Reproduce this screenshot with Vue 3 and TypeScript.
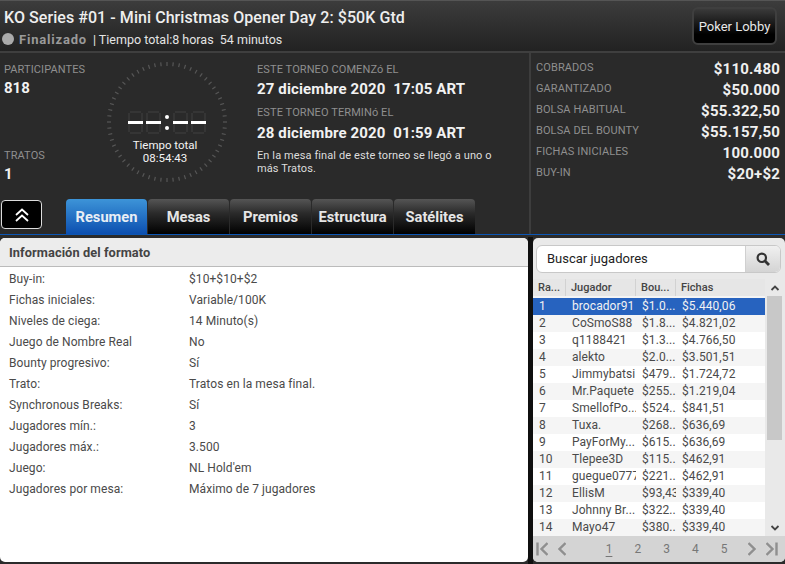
<script setup lang="ts">
const tabs = ['Resumen', 'Mesas', 'Premios', 'Estructura', 'Satélites']

const stats = [
  ['COBRADOS', '$110.480'],
  ['GARANTIZADO', '$50.000'],
  ['BOLSA HABITUAL', '$55.322,50'],
  ['BOLSA DEL BOUNTY', '$55.157,50'],
  ['FICHAS INICIALES', '100.000'],
  ['BUY-IN', '$20+$2'],
]

const info = [
  ['Buy-in:', '$10+$10+$2'],
  ['Fichas iniciales:', 'Variable/100K'],
  ['Niveles de ciega:', '14 Minuto(s)'],
  ['Juego de Nombre Real', 'No'],
  ['Bounty progresivo:', 'Sí'],
  ['Trato:', 'Tratos en la mesa final.'],
  ['Synchronous Breaks:', 'Sí'],
  ['Jugadores mín.:', '3'],
  ['Jugadores máx.:', '3.500'],
  ['Juego:', "NL Hold'em"],
  ['Jugadores por mesa:', 'Máximo de 7 jugadores'],
]

const players = [
  ['1', 'brocador91', '$1.0...', '$5.440,06'],
  ['2', 'CoSmoS88', '$1.8...', '$4.821,02'],
  ['3', 'q1188421', '$1.3...', '$4.766,50'],
  ['4', 'alekto', '$2.0...', '$3.501,51'],
  ['5', 'Jimmybatsi', '$479...', '$1.724,72'],
  ['6', 'Mr.Paquete', '$255...', '$1.219,04'],
  ['7', 'SmellofPo...', '$524...', '$841,51'],
  ['8', 'Tuxa.', '$268...', '$636,69'],
  ['9', 'PayForMy...', '$615...', '$636,69'],
  ['10', 'Tlepee3D', '$115...', '$462,91'],
  ['11', 'guegue0777', '$221...', '$462,91'],
  ['12', 'EllisM', '$93,43', '$339,40'],
  ['13', 'Johnny Br...', '$322...', '$339,40'],
  ['14', 'Mayo47', '$380...', '$339,40'],
]

const ticks = Array.from({ length: 60 }, (_, i) => i * 6)
const digitX = [-39, -21, 6, 24]
</script>

<template>
  <div class="page">
    <header class="head">
      <div class="head-text">
        <h1>KO Series #01 - Mini Christmas Opener Day 2: $50K Gtd</h1>
        <div class="status">
          <span class="dot"></span>
          <b>Finalizado</b>
          <span class="total">| Tiempo total:8 horas&nbsp; 54 minutos</span>
        </div>
      </div>
      <button class="lobby">Poker Lobby</button>
    </header>

    <section class="top">
      <div class="summary">
        <div class="overview">
          <div class="counts">
            <div>
              <div class="label">PARTICIPANTES</div>
              <div class="big">818</div>
            </div>
            <div>
              <div class="label">TRATOS</div>
              <div class="big">1</div>
            </div>
          </div>
          <div class="clock">
            <svg width="122" height="122" viewBox="-61 -61 122 122">
              <rect
                v-for="a in ticks"
                :key="a"
                x="-0.6"
                y="-60"
                width="1.2"
                height="4"
                fill="#575757"
                :transform="`rotate(${a})`"
              />
              <g v-for="x in digitX" :key="x" :transform="`translate(${x} -11)`">
                <path
                  d="M2 1H13M1 2V10M14 2V10M1 13V21M14 13V21M2 22H13"
                  fill="none"
                  stroke="#353535"
                  stroke-width="2"
                />
                <rect x="0" y="10" width="15" height="3" fill="#fff" />
              </g>
              <circle cx="0" cy="-5" r="2" fill="#fff" />
              <circle cx="0" cy="6" r="2" fill="#fff" />
            </svg>
            <div class="clock-text">Tiempo total<br />08:54:43</div>
          </div>
          <div class="dates">
            <div class="label">ESTE TORNEO COMENZó EL</div>
            <div class="big date">27 diciembre 2020&nbsp; 17:05 ART</div>
            <div class="label second">ESTE TORNEO TERMINó EL</div>
            <div class="big date last">28 diciembre 2020&nbsp; 01:59 ART</div>
            <p>En la mesa final de este torneo se llegó a uno o más Tratos.</p>
          </div>
        </div>
        <div class="tabbar">
          <button class="collapse" aria-label="Contraer">
            <svg width="16" height="16" viewBox="0 0 16 16" fill="none" stroke="#fff" stroke-width="1.8">
              <path d="M2 8 8 2.5 14 8M2 14 8 8.5 14 14" />
            </svg>
          </button>
          <nav class="tabs">
            <a v-for="(t, i) in tabs" :key="t" class="tab" :class="{ active: i === 0 }">{{ t }}</a>
          </nav>
        </div>
      </div>
      <dl class="stats">
        <div v-for="s in stats" :key="s[0]" class="stat">
          <dt>{{ s[0] }}</dt>
          <dd>{{ s[1] }}</dd>
        </div>
      </dl>
    </section>

    <main class="bottom">
      <section class="panel info">
        <h2>Información del formato</h2>
        <div v-for="r in info" :key="r[0]" class="info-row">
          <span>{{ r[0] }}</span>
          <span>{{ r[1] }}</span>
        </div>
      </section>

      <div class="divider"></div>

      <section class="panel players">
        <div class="search">
          <span class="search-text">Buscar jugadores</span>
          <span class="search-btn">
            <svg width="14" height="14" viewBox="0 0 14 14" fill="none" stroke="#333">
              <circle cx="5.8" cy="5.8" r="4.2" stroke-width="2.2" />
              <path d="M8.8 8.8 13 13" stroke-width="2.8" />
            </svg>
          </span>
        </div>
        <div class="table-wrap">
          <div class="table">
            <div class="thead">
              <span>Ra...</span><span>Jugador</span><span>Bou...</span><span>Fichas</span>
            </div>
            <div v-for="(p, i) in players" :key="p[0]" class="row" :class="{ sel: i === 0, odd: i % 2 === 1 }">
              <span v-for="c in p" :key="c">{{ c }}</span>
            </div>
          </div>
          <div class="scrollbar">
            <svg class="arrow" width="10" height="8" viewBox="0 0 10 8" fill="none" stroke="#444" stroke-width="1.8">
              <path d="M1.5 6 5 2.5 8.5 6" />
            </svg>
            <div class="track"><div class="thumb"></div></div>
            <svg class="arrow" width="10" height="8" viewBox="0 0 10 8" fill="none" stroke="#444" stroke-width="1.8">
              <path d="M1.5 2 5 5.5 8.5 2" />
            </svg>
          </div>
        </div>
        <div class="pager">
          <span class="pager-side">
            <svg width="12" height="14" viewBox="0 0 12 14" fill="none" stroke="#8f8f8f" stroke-width="2.4">
              <path d="M1.5 0.5V13.5M11.5 1 5.5 7l6 6" />
            </svg>
            <svg width="8" height="14" viewBox="0 0 8 14" fill="none" stroke="#8f8f8f" stroke-width="2.4">
              <path d="M7.5 1 1.5 7l6 6" />
            </svg>
          </span>
          <span class="pages">
            <u>1</u><span>2</span><span>3</span><span>4</span><span>5</span>
          </span>
          <span class="pager-side">
            <svg width="8" height="14" viewBox="0 0 8 14" fill="none" stroke="#8f8f8f" stroke-width="2.4">
              <path d="M0.5 1l6 6-6 6" />
            </svg>
            <svg width="12" height="14" viewBox="0 0 12 14" fill="none" stroke="#8f8f8f" stroke-width="2.4">
              <path d="M10.5 0.5V13.5M0.5 1l6 6-6 6" />
            </svg>
          </span>
        </div>
      </section>
    </main>
  </div>
</template>

<style>
html,
body {
  margin: 0;
  background: #2b2b2b;
}
</style>

<style scoped>
.page {
  width: 785px;
  height: 564px;
  overflow: hidden;
  display: flex;
  flex-direction: column;
  font-family: Roboto, "Liberation Sans", sans-serif;
  background: #2b2b2b;
}

.head {
  box-sizing: border-box;
  height: 53px;
  flex: none;
  display: flex;
  justify-content: space-between;
  padding: 6px 8px 0 4px;
  background: linear-gradient(#3c3c3c, #222);
  border-top: 1px solid #555;
  border-bottom: 2px solid #3f3f3f;
}

.head-text {
  padding-top: 1px;
}

h1 {
  margin: 0;
  font-size: 16px;
  line-height: 19px;
  font-weight: 500;
  color: #eee;
  letter-spacing: 0.06px;
}

.status {
  display: flex;
  align-items: center;
  margin-top: 3px;
  height: 18px;
  font-size: 12.5px;
  color: #e4e4e4;
}

.dot {
  width: 12px;
  height: 12px;
  border-radius: 50%;
  background: #aaa;
  margin: 0 5px 0 -2px;
}

.status b {
  font-size: 13px;
  font-weight: 700;
  color: #9a9a9a;
  letter-spacing: 0.8px;
  margin-right: 6px;
}

.lobby {
  width: 85px;
  height: 38px;
  padding: 0;
  border: 2px solid #3f3f3f;
  border-radius: 6px;
  background: linear-gradient(#3a3a3a, #000 75%);
  color: #e8e8e8;
  font: 13px Roboto, sans-serif;
}

.top {
  height: 181px;
  flex: none;
  display: flex;
  background: #2a2a2a;
  border-bottom: 1px solid #0c56b4;
}

.summary {
  width: 529px;
  flex: none;
  display: flex;
  flex-direction: column;
  border-right: 2px solid #3d3d3d;
}

.overview {
  height: 146px;
  display: flex;
}

.counts {
  width: 106px;
  padding: 10px 0 0 4px;
  box-sizing: border-box;
  display: flex;
  flex-direction: column;
  gap: 51px;
}

.label {
  font-size: 11px;
  line-height: 13px;
  color: #8f8f8f;
  letter-spacing: 0.1px;
}

.big {
  margin-top: 3px;
  font-size: 15px;
  line-height: 19px;
  font-weight: 700;
  color: #f2f2f2;
}

.clock {
  position: relative;
  width: 122px;
  height: 122px;
  margin-top: 8px;
  flex: none;
}

.clock-text {
  position: absolute;
  left: 0;
  right: 4px;
  top: 78px;
  text-align: center;
  font-size: 11.5px;
  line-height: 13px;
  color: #f4f4f4;
}

.dates {
  margin-left: 29px;
  padding-top: 10px;
  width: 250px;
}

.date {
  font-size: 15px;
  letter-spacing: 0.13px;
  margin-top: 4px;
}

.date.last {
  margin-top: 5px;
}

.second {
  margin-top: 7px;
}

.dates p {
  margin: 6px 0 0;
  font-size: 11px;
  line-height: 13px;
  color: #ddd;
  letter-spacing: 0.1px;
}

.tabbar {
  flex: 1;
  display: flex;
  align-items: flex-end;
  padding-left: 1px;
}

.collapse {
  width: 41px;
  height: 29px;
  margin-bottom: 5px;
  padding: 0;
  display: flex;
  align-items: center;
  justify-content: center;
  background: #000;
  border: 1px solid #ddd;
  border-radius: 4px;
}

.tabs {
  display: flex;
  gap: 1px;
  margin-left: 24px;
}

.tab {
  box-sizing: border-box;
  width: 81px;
  height: 35px;
  display: flex;
  align-items: center;
  justify-content: center;
  border-radius: 4px 4px 0 0;
  background: linear-gradient(#555, #2b2b2b 40%, #000);
  color: #e6e6e6;
  font-size: 14.7px;
  font-weight: 700;
}

.tab.active {
  background: linear-gradient(#3d94d8, #0c4fb0);
  color: #e8eef5;
}

.stats {
  flex: 1;
  margin: 0;
  padding: 6px 5px 0 5px;
}

.stat {
  display: flex;
  justify-content: space-between;
  height: 21px;
}

dt {
  font-size: 11px;
  line-height: 17px;
  color: #8f8f8f;
  letter-spacing: 0.1px;
}

dd {
  margin: 0;
  font-size: 15px;
  line-height: 21px;
  font-weight: 700;
  color: #f0f0f0;
  letter-spacing: 0.2px;
}

.bottom {
  flex: 1;
  display: flex;
  padding: 3px 0 2px;
  min-height: 0;
}

.divider {
  width: 5px;
  flex: none;
  margin: -1px 0 -2px;
  background: #0f0f0f;
}

.panel {
  background: #fff;
  border-radius: 5px 5px 5px 5px;
  color: #333;
  overflow: hidden;
}

.info {
  width: 528px;
  flex: none;
  font-size: 12px;
  letter-spacing: 0.08px;
}

h2 {
  box-sizing: border-box;
  margin: 0 0 2px;
  height: 29px;
  padding-left: 9px;
  font-size: 12.8px;
  line-height: 30px;
  font-weight: 700;
  color: #444;
  background: #ececec;
  border-bottom: 1px solid #bbb;
}

.info-row {
  display: grid;
  grid-template-columns: 180px 1fr;
  padding-left: 9px;
  height: 21px;
  line-height: 21px;
  color: #4a4a4a;
}

.players {
  flex: 1;
  display: flex;
  flex-direction: column;
  background: #e9e9e9;
}

.search {
  display: flex;
  box-sizing: border-box;
  height: 28px;
  margin: 7px 4px 6px 3px;
  background: #fff;
  border: 1px solid #c8c8c8;
  border-radius: 6px;
  overflow: hidden;
}

.search-text {
  flex: 1;
  padding-left: 10px;
  font-size: 13px;
  line-height: 26px;
  color: #222;
}

.search-btn {
  width: 34px;
  display: flex;
  align-items: center;
  justify-content: center;
  background: linear-gradient(#f0f0f0, #d4d4d4);
  border-left: 1px solid #d0d0d0;
}

.table-wrap {
  flex: 1;
  display: flex;
  min-height: 0;
}

.table {
  width: 232px;
  background: #fff;
  font-size: 12px;
}

.thead,
.row {
  display: grid;
  grid-template-columns: 33px 70px 40px 1fr;
  white-space: nowrap;
}

.thead {
  height: 19px;
  line-height: 17px;
  background: linear-gradient(#e6e6e6 17px, #f4f4f4 17px);
  font-size: 11px;
  font-weight: 500;
  color: #444;
}

.thead span {
  padding-left: 5px;
  border-right: 1px solid #d2d2d2;
  height: 17px;
  line-height: 18px;
}

.thead span:last-child {
  border-right: 0;
}

.row {
  height: 17px;
  line-height: 17px;
  color: #4a4a4a;
  letter-spacing: 0.08px;
}

.row span {
  overflow: hidden;
  padding-left: 6px;
}

.row.odd {
  background: #f5f5f5;
}

.row.sel {
  background: #2763bf;
  color: #f2f2f2;
}

.scrollbar {
  box-sizing: border-box;
  width: 17px;
  padding-left: 2px;
  display: flex;
  flex-direction: column;
  align-items: center;
  background: #e9e9e9;
}

.arrow {
  flex: none;
  margin: 5px 0 4px;
}

.track {
  flex: 1;
  width: 100%;
}

.thumb {
  height: 144px;
  background: #c8c8c8;
}

.pager {
  height: 26px;
  flex: none;
  display: flex;
  align-items: center;
  justify-content: space-between;
  padding: 0 7px 0 3px;
  background: #d4d4d4;
  font-size: 12px;
  color: #777;
}

.pager-side {
  display: flex;
  align-items: center;
  gap: 10px;
}

.pages {
  display: flex;
  gap: 22px;
  margin-left: 19px;
  margin-right: 0;
}

.pages u {
  text-underline-offset: 3px;
}
</style>
